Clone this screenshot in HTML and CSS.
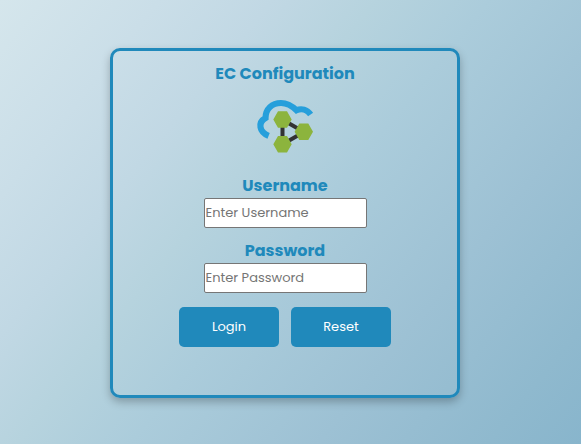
FILE: index.html
```html
<!DOCTYPE html>
<html lang="en">
<head>
<meta charset="utf-8">
<title>EC Configuration</title>
<link rel="stylesheet" href="styles.css">
</head>
<body>
<form class="card">
  <h1 class="title">EC Configuration</h1>
  <svg class="logo" viewBox="0 0 80 70" width="80" height="70" aria-hidden="true">
    <path class="cloud" d="M23.6 45.8C14.2 42 12.5 32.5 20.5 28C20.5 19 27 13 36 13C43 13 47 16 51.5 20.3C56.5 18 62 19.5 65.6 24.5"/>
    <path class="links" d="M37.5 30V54M38 30L59 42L38 54"/>
    <path class="nodes" d="M33 21.3h9l4.7 8.2-4.7 8.2h-9l-4.7-8.2zM33 46h9l4.7 8.2-4.7 8.2h-9l-4.7-8.2zM54.3 33.5h9l4.7 8.2-4.7 8.2h-9l-4.7-8.2z"/>
  </svg>
  <label class="label" for="user">Username</label>
  <input class="field" id="user" type="text" placeholder="Enter Username">
  <label class="label label-password" for="pass">Password</label>
  <input class="field" id="pass" type="password" placeholder="Enter Password">
  <div class="actions">
    <button class="button" type="button">Login</button>
    <button class="button" type="reset">Reset</button>
  </div>
</form>
</body>
</html>
```
FILE: styles.css
```css
* { box-sizing: border-box; }
body {
  margin: 0;
  height: 444px;
  padding-top: 48px;
  font-family: Poppins, Inter, sans-serif;
  background: linear-gradient(129deg, #d5e6ec 0%, #cadee8 17%, #c1d8e4 29%, #b6d3de 40%, #abccdb 52%, #9dc1d4 72%, #8fb9ce 90%, #88b5cc 100%);
}
.card {
  width: 350px;
  height: 350px;
  margin: 0 auto 0 110px;
  padding-top: 11px;
  border: 3px solid #2089bb;
  border-radius: 10px;
  box-shadow: 0 4px 8px rgba(0, 0, 0, .25);
  display: flex;
  flex-direction: column;
  align-items: center;
}
.title, .label {
  margin: 0;
  font-size: 16px;
  font-weight: 700;
  line-height: 24px;
  color: #2089bb;
}
.logo { margin-top: 4px; }
.label { margin-top: 14px; }
.cloud { fill: none; stroke: #269fdb; stroke-width: 6.2; }
.links { fill: none; stroke: #333; stroke-width: 4; }
.nodes { fill: #8cb43d; }
.field {
  width: 163px;
  height: 30px;
  margin: 0;
  padding: 1px;
  border: 1px solid #767676;
  border-radius: 2px;
  background: #fff;
  font: 400 13px Poppins, Inter, sans-serif;
}
.field::placeholder { color: #757575; }
.label-password { margin-top: 11px; }
.actions { display: flex; gap: 12px; margin-top: 14px; }
.button {
  width: 100px;
  height: 40px;
  padding: 0;
  border: 0;
  border-radius: 5px;
  background: #2089bb;
  color: #fff;
  font: 400 13px Poppins, Inter, sans-serif;
}
```
